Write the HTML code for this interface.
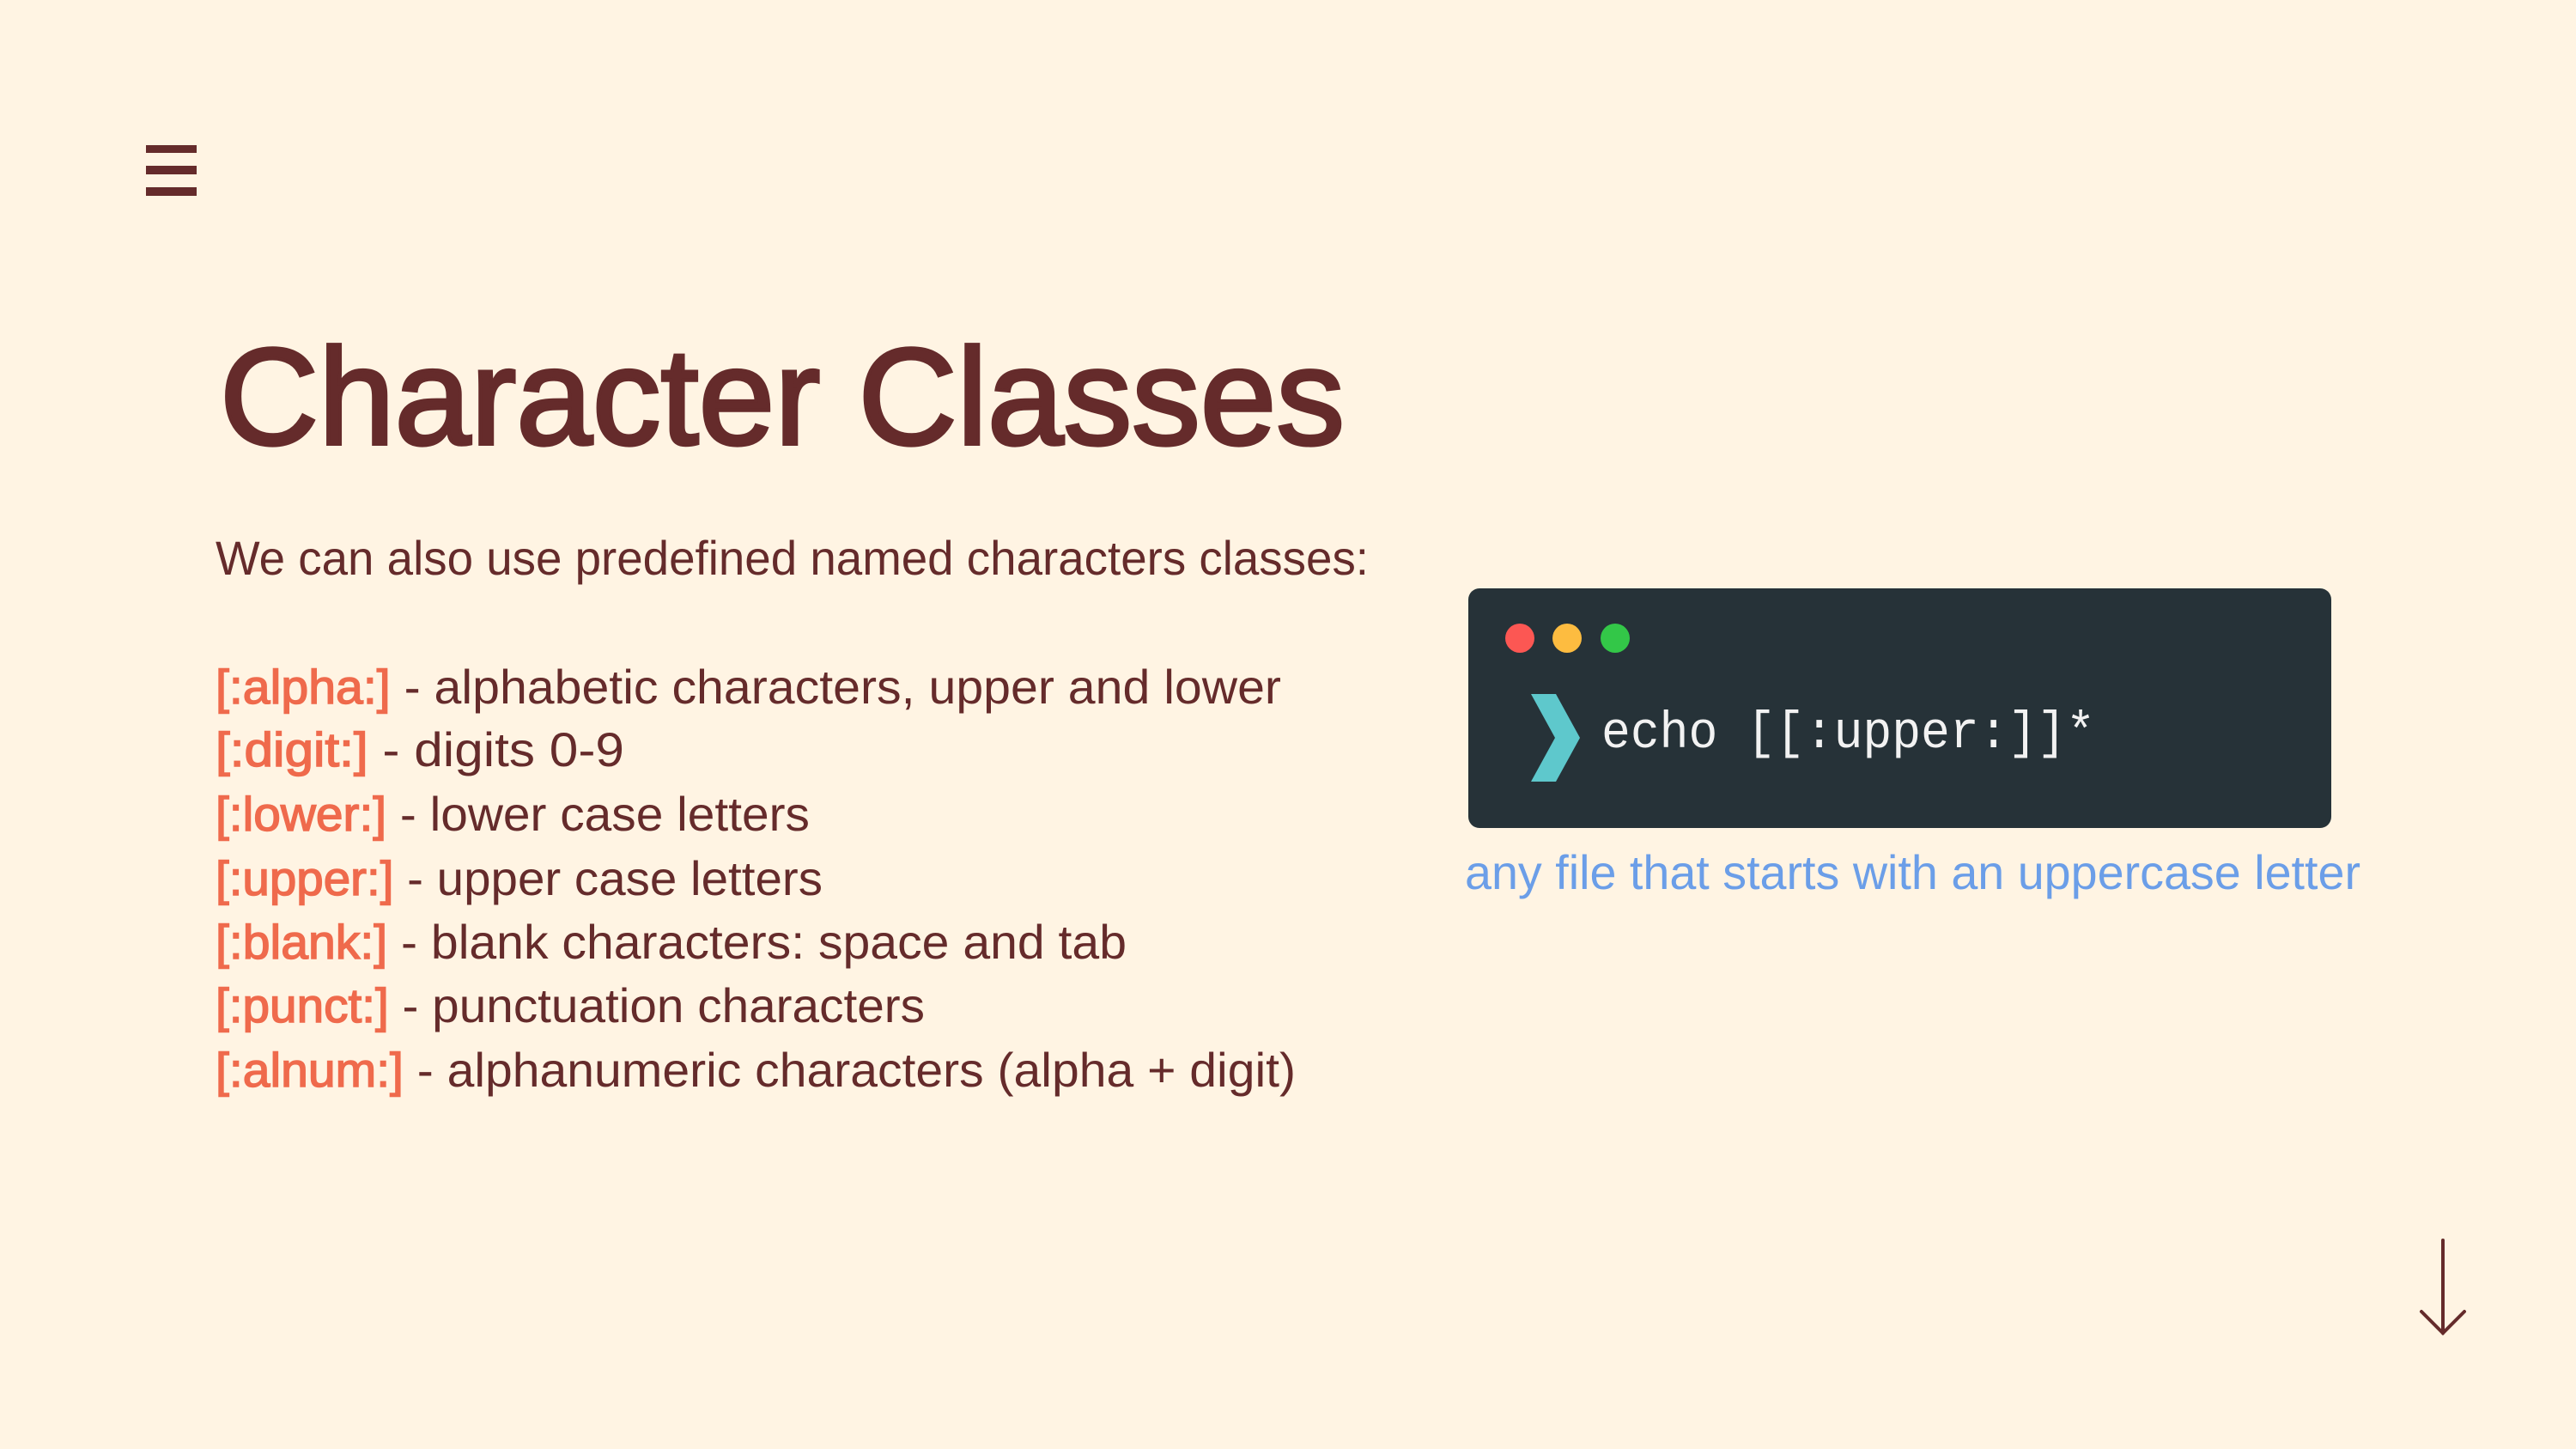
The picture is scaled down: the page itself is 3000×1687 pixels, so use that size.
<!DOCTYPE html>
<html><head><meta charset="utf-8"><style>
html,body{margin:0;padding:0;background:#fff4e3;}
svg{display:block}
</style></head><body>
<svg width="3000" height="1687" viewBox="0 0 3000 1687" xmlns="http://www.w3.org/2000/svg">
<rect width="3000" height="1687" fill="#fff4e3"/>
<g fill="#652b2b">
<rect x="170" y="169" width="59" height="9"/>
<rect x="170" y="193" width="59" height="10"/>
<rect x="170" y="218" width="59" height="10"/>
</g>
<text x="256" y="517" font-family="Liberation Sans, sans-serif" font-size="160" fill="#652b2b" stroke="#652b2b" stroke-width="4" textLength="1310" lengthAdjust="spacingAndGlyphs">Character Classes</text>
<g font-family="Liberation Sans, sans-serif" font-size="56" fill="#652b2b">
<text x="251" y="669" textLength="1343" lengthAdjust="spacingAndGlyphs">We can also use predefined named characters classes:</text>
<text x="251" y="819" textLength="1241" lengthAdjust="spacingAndGlyphs"><tspan fill="#ef6a4c" stroke="#ef6a4c" stroke-width="1.5">[:alpha:]</tspan> - alphabetic characters, upper and lower</text>
<text x="251" y="892" textLength="476" lengthAdjust="spacingAndGlyphs"><tspan fill="#ef6a4c" stroke="#ef6a4c" stroke-width="1.5">[:digit:]</tspan> - digits 0-9</text>
<text x="251" y="967" textLength="692" lengthAdjust="spacingAndGlyphs"><tspan fill="#ef6a4c" stroke="#ef6a4c" stroke-width="1.5">[:lower:]</tspan> - lower case letters</text>
<text x="251" y="1042" textLength="707" lengthAdjust="spacingAndGlyphs"><tspan fill="#ef6a4c" stroke="#ef6a4c" stroke-width="1.5">[:upper:]</tspan> - upper case letters</text>
<text x="251" y="1116" textLength="1061" lengthAdjust="spacingAndGlyphs"><tspan fill="#ef6a4c" stroke="#ef6a4c" stroke-width="1.5">[:blank:]</tspan> - blank characters: space and tab</text>
<text x="251" y="1190" textLength="826" lengthAdjust="spacingAndGlyphs"><tspan fill="#ef6a4c" stroke="#ef6a4c" stroke-width="1.5">[:punct:]</tspan> - punctuation characters</text>
<text x="251" y="1265" textLength="1258" lengthAdjust="spacingAndGlyphs"><tspan fill="#ef6a4c" stroke="#ef6a4c" stroke-width="1.5">[:alnum:]</tspan> - alphanumeric characters (alpha + digit)</text>
</g>
<rect x="1710" y="685" width="1005" height="279" rx="13" fill="#263238"/>
<circle cx="1770" cy="743" r="17" fill="#fc5753"/>
<circle cx="1825" cy="743" r="17" fill="#fdbc40"/>
<circle cx="1881" cy="743" r="17" fill="#33c748"/>
<polygon points="1783,808 1812,808 1840,859 1812,910 1783,910 1811,859" fill="#5ec8cc"/>
<text x="1865" y="870" font-family="Liberation Mono, monospace" font-size="60" fill="#f2f2f2" textLength="575" lengthAdjust="spacingAndGlyphs">echo [[:upper:]]*</text>
<text x="1706" y="1035" font-family="Liberation Sans, sans-serif" font-size="56" fill="#6b9ee8" textLength="1043" lengthAdjust="spacingAndGlyphs">any file that starts with an uppercase letter</text>
<g stroke="#652b2b" stroke-width="4" fill="none" stroke-linecap="round">
<line x1="2845" y1="1444" x2="2845" y2="1552"/>
<polyline points="2820,1527 2845,1552 2870,1527"/>
</g>
</svg>
</body></html>
